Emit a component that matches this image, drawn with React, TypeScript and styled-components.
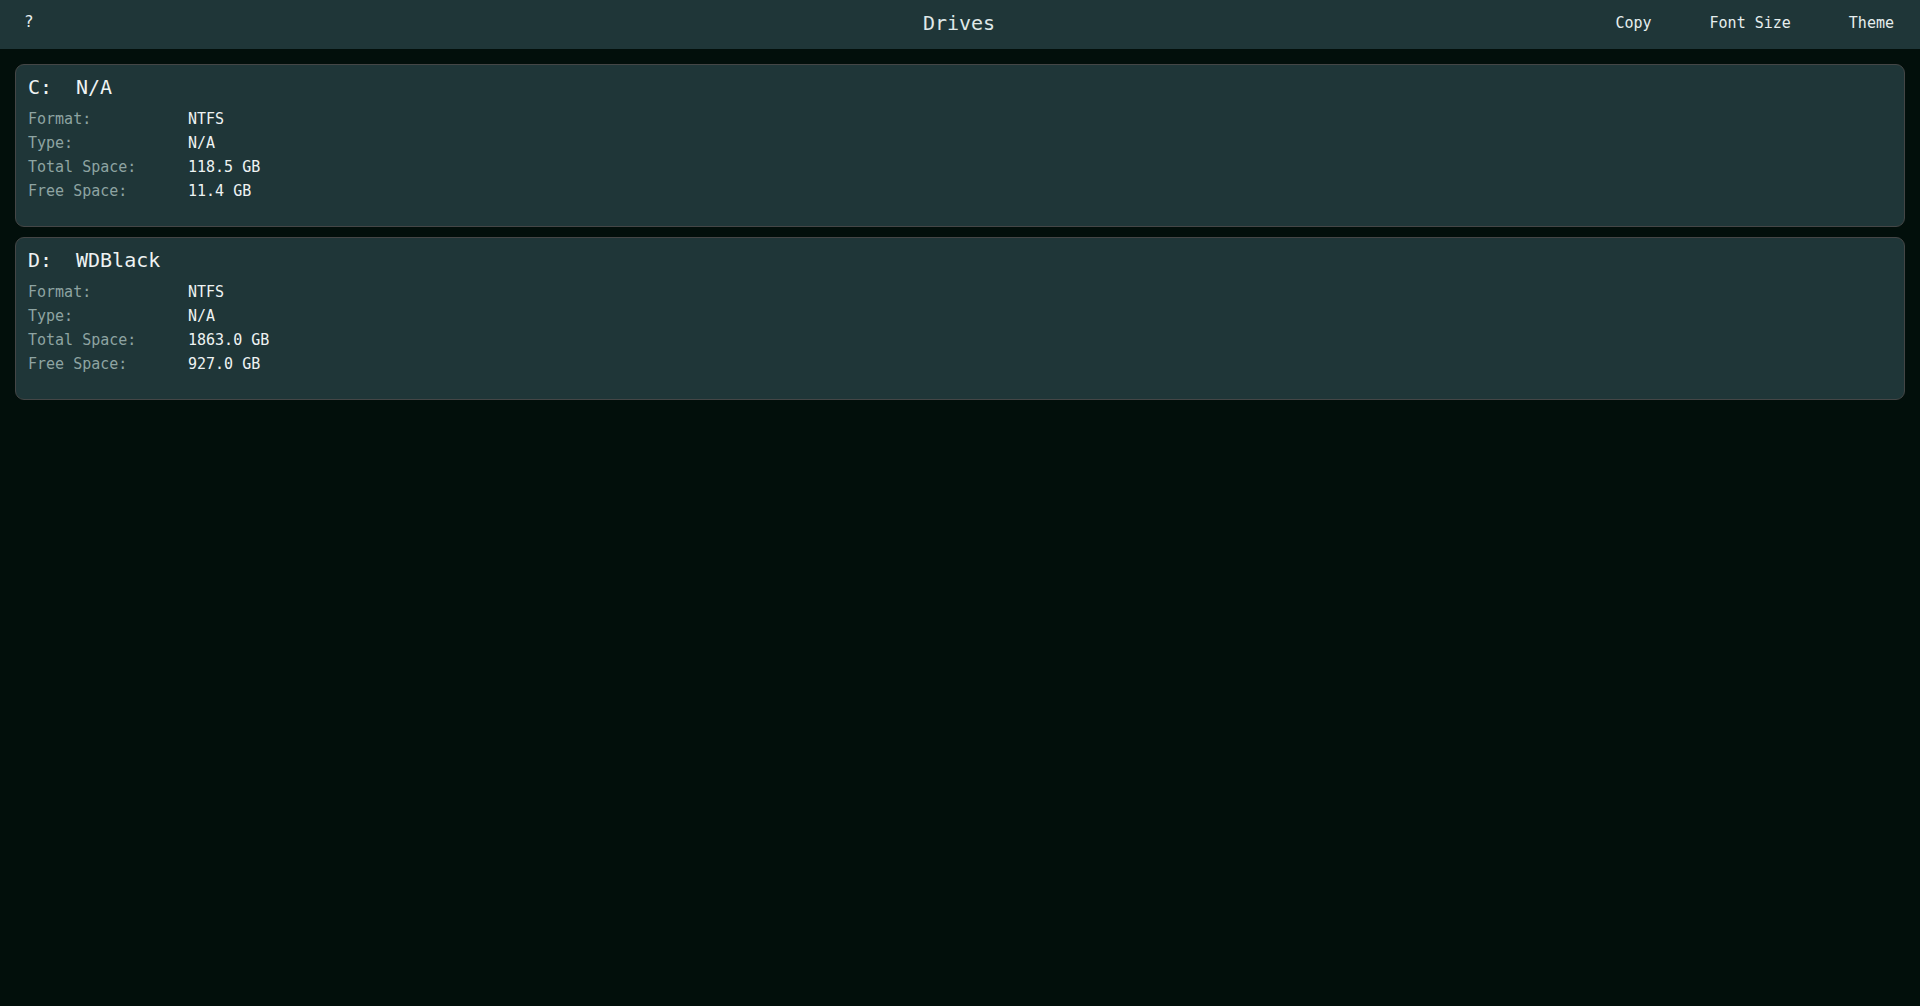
import React from "react";
import styled, { createGlobalStyle } from "styled-components";

type Drive = {
  letter: string;
  label: string;
  format: string;
  type: string;
  total: string;
  free: string;
};

const drives: Drive[] = [
  { letter: "C:", label: "N/A", format: "NTFS", type: "N/A", total: "118.5 GB", free: "11.4 GB" },
  { letter: "D:", label: "WDBlack", format: "NTFS", type: "N/A", total: "1863.0 GB", free: "927.0 GB" },
];

const App = () => {
  return (
    <Page>
      <GlobalStyle />
      <Header>
        <HelpButton>?</HelpButton>
        <Title>Drives</Title>
        <Menu>
          <MenuButton>Copy</MenuButton>
          <MenuButton>Font Size</MenuButton>
          <MenuButton>Theme</MenuButton>
        </Menu>
      </Header>
      <Main>
        {drives.map((d) => (
          <Card key={d.letter}>
            <CardTitle>
              <Letter>{d.letter}</Letter>
              {d.label}
            </CardTitle>
            <Info>
              <Label>Format:</Label>
              <Value>{d.format}</Value>
              <Label>Type:</Label>
              <Value>{d.type}</Value>
              <Label>Total Space:</Label>
              <Value>{d.total}</Value>
              <Label>Free Space:</Label>
              <Value>{d.free}</Value>
            </Info>
          </Card>
        ))}
      </Main>
    </Page>
  );
};

const mono = `"DejaVu Sans Mono", "Liberation Mono", monospace`;

const GlobalStyle = createGlobalStyle`
  html, body {
    margin: 0;
    padding: 0;
    background: #020f0b;
  }
  body {
    font-family: ${mono};
  }
`;

const Page = styled.div`
  min-height: 100vh;
  background: #020f0b;
  color: #e6eeee;
`;

const Header = styled.header`
  height: 49px;
  box-sizing: border-box;
  background: #1f3638;
  display: grid;
  grid-template-columns: 1fr auto 1fr;
  align-items: center;
  padding: 0 26px 4px 24px;
`;

const HelpButton = styled.span`
  justify-self: start;
  font-size: 16px;
  color: #e6eeee;
  margin-top: -2px;
  cursor: pointer;
`;

const Title = styled.h1`
  margin: 0;
  font-size: 20px;
  font-weight: normal;
  color: #dfe8e8;
`;

const Menu = styled.nav`
  justify-self: end;
  display: flex;
  gap: 58px;
`;

const MenuButton = styled.span`
  font-size: 15px;
  color: #e6eeee;
  cursor: pointer;
`;

const Main = styled.main`
  display: flex;
  flex-direction: column;
  gap: 10px;
  padding: 15px 15px;
`;

const Card = styled.section`
  background: #1f3638;
  border: 1px solid #444646;
  border-radius: 9px;
  padding: 10px 12px 23px;
`;

const CardTitle = styled.h2`
  margin: 0 0 8px;
  font-size: 20px;
  line-height: 24px;
  font-weight: normal;
  color: #eef3f3;
`;

const Letter = styled.span`
  display: inline-block;
  width: 48px;
`;

const Info = styled.div`
  display: grid;
  grid-template-columns: 160px auto;
  justify-content: start;
  font-size: 15px;
  line-height: 24px;
`;

const Label = styled.span`
  color: #8ea4a2;
`;

const Value = styled.span`
  color: #eef3f3;
`;

export default App;
